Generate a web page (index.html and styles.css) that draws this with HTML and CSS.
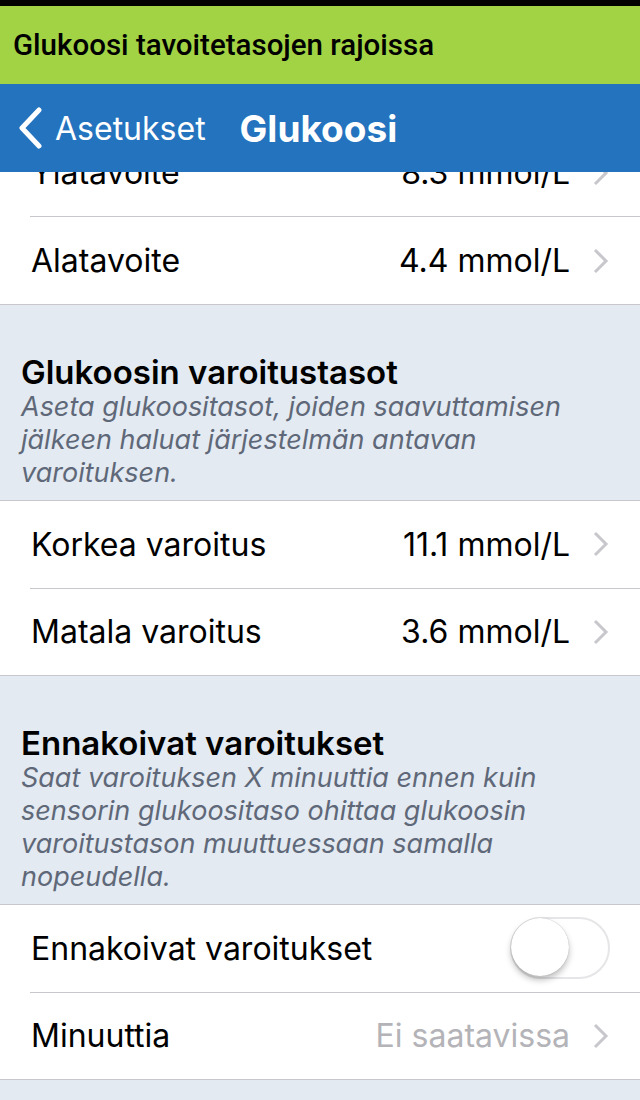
FILE: index.html
```html
<!DOCTYPE html>
<html lang="fi">
<head>
  <meta charset="UTF-8">
  <title>Glukoosi</title>
  <link rel="stylesheet" href="styles.css">
</head>
<body>
  <div class="statusbar"></div>
  <div class="banner">Glukoosi tavoitetasojen rajoissa</div>
  <header class="navbar">
    <a class="back" href="#">
      <svg width="26" height="42" viewBox="0 0 26 42"><path d="M22 3 L5 21 L22 39" fill="none" stroke="#fff" stroke-width="5" stroke-linecap="round" stroke-linejoin="round"/></svg>
      <span>Asetukset</span>
    </a>
    <h1>Glukoosi</h1>
  </header>

  <main class="content">
    <ul class="group first">
      <li class="row">
        <span class="label">Ylätavoite</span>
        <span class="value">8.3 mmol/L</span>
        <svg class="chev" width="18" height="28" viewBox="0 0 18 28"><path d="M3 3 L14 14 L3 25" fill="none" stroke="#c7c7cc" stroke-width="3"/></svg>
      </li>
      <li class="row">
        <span class="label">Alatavoite</span>
        <span class="value">4.4 mmol/L</span>
        <svg class="chev" width="18" height="28" viewBox="0 0 18 28"><path d="M3 3 L14 14 L3 25" fill="none" stroke="#c7c7cc" stroke-width="3"/></svg>
      </li>
    </ul>

    <section class="section-head">
      <h2>Glukoosin varoitustasot</h2>
      <p>Aseta glukoositasot, joiden saavuttamisen jälkeen haluat järjestelmän antavan varoituksen.</p>
    </section>

    <ul class="group">
      <li class="row">
        <span class="label">Korkea varoitus</span>
        <span class="value">11.1 mmol/L</span>
        <svg class="chev" width="18" height="28" viewBox="0 0 18 28"><path d="M3 3 L14 14 L3 25" fill="none" stroke="#c7c7cc" stroke-width="3"/></svg>
      </li>
      <li class="row">
        <span class="label">Matala varoitus</span>
        <span class="value">3.6 mmol/L</span>
        <svg class="chev" width="18" height="28" viewBox="0 0 18 28"><path d="M3 3 L14 14 L3 25" fill="none" stroke="#c7c7cc" stroke-width="3"/></svg>
      </li>
    </ul>

    <section class="section-head">
      <h2>Ennakoivat varoitukset</h2>
      <p>Saat varoituksen X minuuttia ennen kuin sensorin glukoositaso ohittaa glukoosin varoitustason muuttuessaan samalla nopeudella.</p>
    </section>

    <ul class="group">
      <li class="row">
        <span class="label">Ennakoivat varoitukset</span>
        <span class="switch"><span class="knob"></span></span>
      </li>
      <li class="row">
        <span class="label">Minuuttia</span>
        <span class="value muted">Ei saatavissa</span>
        <svg class="chev" width="18" height="28" viewBox="0 0 18 28"><path d="M3 3 L14 14 L3 25" fill="none" stroke="#c7c7cc" stroke-width="3"/></svg>
      </li>
    </ul>
  </main>
</body>
</html>
```

FILE: styles.css
```css
/* Asetukset-näkymä, iOS-tyylinen lista */
body {
  margin: 0;
  width: 640px;
  height: 1100px;
  overflow: hidden;
  background: #e3eaf2;
  font-family: Inter, "Noto Sans", sans-serif;
  color: #000;
}
.statusbar {
  height: 6px;
  background: #000;
}
.banner {
  height: 78px;
  background: #a2d344;
  padding-left: 13px;
  font-family: Roboto, sans-serif;
  font-size: 29.5px;
  font-weight: 500;
  line-height: 78px;
  color: #000;
}
.navbar {
  position: relative;
  z-index: 1;
  height: 88px;
  background: #2473be;
  display: flex;
  align-items: center;
  color: #fff;
}
.back {
  display: flex;
  align-items: center;
  color: #fff;
  text-decoration: none;
  padding-left: 17px;
  font-size: 32px;
}
.back svg {
  margin-right: 12px;
}
.navbar h1 {
  margin: 0 0 0 34px;
  font-size: 37px;
  font-weight: 700;
}
.content {
  margin-top: -43px;
}
.group {
  list-style: none;
  margin: 0;
  padding: 0;
  background: #fff;
  border-top: 1px solid #c8c8cc;
  border-bottom: 1px solid #c8c8cc;
}
.group.first {
  border-top: none;
}
.row {
  height: 86.5px;
  margin-left: 30px;
  padding-right: 30px;
  display: flex;
  align-items: center;
  font-size: 32px;
}
.group.first .row {
  height: 87px;
}
.row + .row {
  border-top: 1px solid #c8c8cc;
}
.label {
  flex: 1;
  padding-left: 1px;
}
.value {
  margin-right: 22px;
}
.value.muted {
  color: #b3b3b8;
}
.chev {
  display: block;
}
.section-head {
  padding: 49px 21px 11px;
}
.section-head h2 {
  margin: 0;
  font-size: 33px;
  line-height: 36px;
  font-weight: 600;
}
.section-head p {
  margin: 0;
  font-size: 27px;
  line-height: 33px;
  font-style: italic;
  color: #5f6878;
}
.switch {
  position: relative;
  width: 96px;
  height: 58px;
  border: 2px solid #e6e6e8;
  border-radius: 31px;
  background: #fff;
}
.knob {
  position: absolute;
  left: -1px;
  top: -1px;
  width: 58px;
  height: 58px;
  border-radius: 50%;
  background: #fff;
  box-shadow: 0 4px 6px rgba(0, 0, 0, 0.25), 0 0 1px rgba(0, 0, 0, 0.3);
}
```
